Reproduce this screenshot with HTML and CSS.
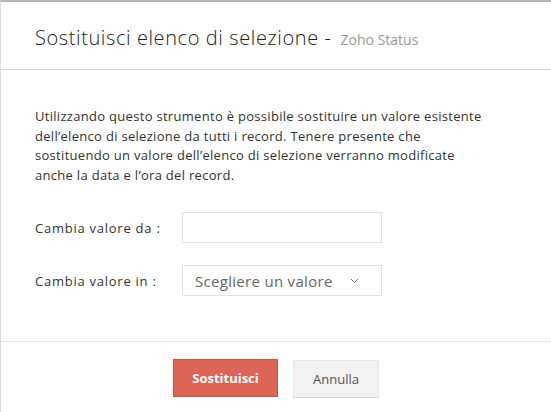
FILE: index.html
```html
<!DOCTYPE html>
<html lang="it">
<head>
<meta charset="utf-8">
<title>Sostituisci elenco di selezione</title>
<link rel="stylesheet" href="styles.css">
</head>
<body>
<div class="dialog">
  <div class="header">
    <span class="title">Sostituisci elenco di selezione -</span>
    <span class="subtitle">Zoho Status</span>
  </div>
  <div class="content">
    <p class="desc">Utilizzando questo strumento è possibile sostituire un valore esistente dell’elenco di selezione da tutti i record. Tenere presente che sostituendo un valore dell’elenco di selezione verranno modificate anche la data e l’ora del record.</p>
    <div class="form">
      <div class="row">
        <label class="label">Cambia valore da :</label>
        <div class="field"></div>
      </div>
      <div class="row">
        <label class="label">Cambia valore in :</label>
        <div class="field select">
          <span class="placeholder">Scegliere un valore</span>
          <svg class="chev" width="9" height="6" viewBox="0 0 9 6"><path d="M1 1 L4.5 4.5 L8 1" fill="none" stroke="#777" stroke-width="1"/></svg>
        </div>
      </div>
    </div>
  </div>
  <div class="footer">
    <button class="btn primary">Sostituisci</button>
    <button class="btn secondary">Annulla</button>
  </div>
</div>
</body>
</html>
```
FILE: styles.css
```css
html, body {
  margin: 0;
  padding: 0;
  background: #fff;
}
.dialog {
  width: 551px;
  height: 412px;
  box-sizing: border-box;
  border-top: 2px solid #b5b5b5;
  border-left: 1px solid #dcdcdc;
  font-family: "Open Sans", Lato, sans-serif;
  color: #333;
  display: flex;
  flex-direction: column;
}
.header {
  height: 68px;
  box-sizing: border-box;
  border-bottom: 1px solid #d9d9d9;
  padding-left: 34px;
  padding-top: 4px;
  display: flex;
  align-items: center;
  gap: 9px;
}
.title {
  font-size: 20px;
  font-weight: 300;
  letter-spacing: 0.6px;
  color: #222;
}
.subtitle {
  font-size: 14px;
  color: #999;
  padding-top: 3px;
}
.content {
  height: 271px;
  box-sizing: border-box;
  padding: 37px 0 0 34px;
}
.desc {
  margin: 0;
  width: 456px;
  font-size: 13px;
  letter-spacing: 0.3px;
  line-height: 19.5px;
  color: #333;
}
.form {
  margin-top: 27px;
  display: flex;
  flex-direction: column;
  gap: 22px;
}
.row {
  display: flex;
  align-items: center;
}
.label {
  width: 147px;
  font-size: 13px;
  letter-spacing: 0.75px;
  color: #333;
}
.field {
  width: 200px;
  height: 31px;
  box-sizing: border-box;
  border: 1px solid #e2e2e2;
  background: #fff;
}
.select {
  display: flex;
  align-items: center;
  padding-left: 12px;
  padding-right: 22px;
  justify-content: space-between;
}
.placeholder {
  font-size: 15px;
  letter-spacing: 0.3px;
  color: #666;
}
.chev {
  margin-top: 1px;
}
.footer {
  flex: 1;
  border-top: 1px solid #e4e4e4;
  display: flex;
  justify-content: center;
  align-items: flex-start;
  padding-top: 17px;
  gap: 15px;
}
.btn {
  height: 38px;
  box-sizing: border-box;
  font-family: "Open Sans", Lato, sans-serif;
  font-size: 13px;
  cursor: pointer;
}
.primary {
  width: 105px;
  background: #dd6558;
  border: 1px solid #c75449;
  color: #fff;
  font-weight: 700;
}
.secondary {
  width: 86px;
  background: #f2f2f2;
  border: 1px solid #e6e6e6;
  border-bottom-color: #d6d6d6;
  color: #555;
  margin-top: 1px;
}
```
